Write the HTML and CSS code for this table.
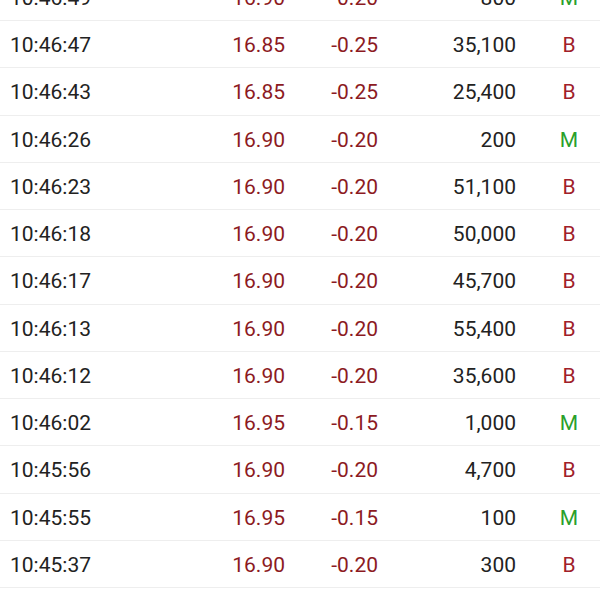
FILE: index.html
```html
<!DOCTYPE html>
<html>
<head>
<meta charset="utf-8">
<link rel="stylesheet" href="styles.css">
</head>
<body>
<div class="list">
  <div class="row"><span class="time">10:46:49</span><span class="price">16.90</span><span class="chg">-0.20</span><span class="vol">800</span><span class="type m">M</span></div>
  <div class="row"><span class="time">10:46:47</span><span class="price">16.85</span><span class="chg">-0.25</span><span class="vol">35,100</span><span class="type b">B</span></div>
  <div class="row"><span class="time">10:46:43</span><span class="price">16.85</span><span class="chg">-0.25</span><span class="vol">25,400</span><span class="type b">B</span></div>
  <div class="row"><span class="time">10:46:26</span><span class="price">16.90</span><span class="chg">-0.20</span><span class="vol">200</span><span class="type m">M</span></div>
  <div class="row"><span class="time">10:46:23</span><span class="price">16.90</span><span class="chg">-0.20</span><span class="vol">51,100</span><span class="type b">B</span></div>
  <div class="row"><span class="time">10:46:18</span><span class="price">16.90</span><span class="chg">-0.20</span><span class="vol">50,000</span><span class="type b">B</span></div>
  <div class="row"><span class="time">10:46:17</span><span class="price">16.90</span><span class="chg">-0.20</span><span class="vol">45,700</span><span class="type b">B</span></div>
  <div class="row"><span class="time">10:46:13</span><span class="price">16.90</span><span class="chg">-0.20</span><span class="vol">55,400</span><span class="type b">B</span></div>
  <div class="row"><span class="time">10:46:12</span><span class="price">16.90</span><span class="chg">-0.20</span><span class="vol">35,600</span><span class="type b">B</span></div>
  <div class="row"><span class="time">10:46:02</span><span class="price">16.95</span><span class="chg">-0.15</span><span class="vol">1,000</span><span class="type m">M</span></div>
  <div class="row"><span class="time">10:45:56</span><span class="price">16.90</span><span class="chg">-0.20</span><span class="vol">4,700</span><span class="type b">B</span></div>
  <div class="row"><span class="time">10:45:55</span><span class="price">16.95</span><span class="chg">-0.15</span><span class="vol">100</span><span class="type m">M</span></div>
  <div class="row"><span class="time">10:45:37</span><span class="price">16.90</span><span class="chg">-0.20</span><span class="vol">300</span><span class="type b">B</span></div>
</div>
</body>
</html>
```
FILE: styles.css
```css
html, body {
  margin: 0;
  padding: 0;
  background: #ffffff;
  overflow: hidden;
}
body {
  font-family: Roboto, "Noto Sans", sans-serif;
  font-size: 21px;
  color: #222222;
}
.list {
  margin-top: -26.25px;
}
.row {
  box-sizing: border-box;
  height: 47.25px;
  border-bottom: 1px solid #eeeeee;
  display: grid;
  grid-template-columns: 200px 75px 93px 138px 22px 62px;
  padding-left: 10px;
  padding-top: 2px;
  align-items: center;
}
.time {
  grid-column: 1;
}
.price {
  grid-column: 2;
  text-align: right;
  color: #8c1a22;
}
.chg {
  grid-column: 3;
  text-align: right;
  color: #8c1a22;
}
.vol {
  grid-column: 4;
  text-align: right;
}
.type {
  grid-column: 6;
  text-align: center;
}
.type.b {
  color: #a0202a;
}
.type.m {
  color: #2aa02a;
}
```
